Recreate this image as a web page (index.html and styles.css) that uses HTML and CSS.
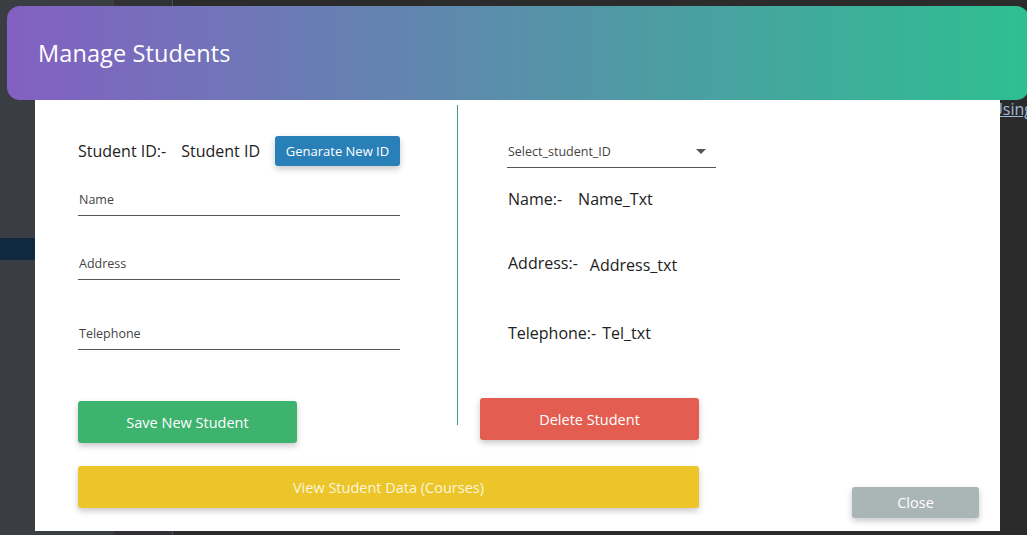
FILE: index.html
```html
<!DOCTYPE html>
<html>
<head>
<meta charset="utf-8">
<link rel="stylesheet" href="styles.css">
</head>
<body>
<div class="app">
  <div class="side">
    <div class="side-band"></div>
  </div>
  <div class="side2"></div>
  <div class="main">
    <a class="link" href="#">Using</a>
  </div>
</div>

<div class="modal">
  <div class="header"><h1 class="title">Manage Students</h1></div>
  <div class="body">
    <div class="top">
      <div class="left">
        <div class="id-row">
          <span class="lbl">Student ID:-</span>
          <span class="lbl id-val">Student ID</span>
          <button class="btn btn-blue">Genarate New ID</button>
        </div>
        <div class="field f-name"><span class="flabel">Name</span></div>
        <div class="field f-addr"><span class="flabel">Address</span></div>
        <div class="field f-tel"><span class="flabel">Telephone</span></div>
        <button class="btn btn-green">Save New Student</button>
      </div>
      <div class="divider"></div>
      <div class="right">
        <div class="select"><span class="flabel">Select_student_ID</span><span class="caret"></span></div>
        <div class="info i-name"><span class="lbl">Name:-</span><span class="lbl v-name">Name_Txt</span></div>
        <div class="info i-addr"><span class="lbl">Address:-</span><span class="lbl v-addr">Address_txt</span></div>
        <div class="info i-tel"><span class="lbl">Telephone:-</span><span class="lbl v-tel">Tel_txt</span></div>
        <button class="btn btn-red">Delete Student</button>
      </div>
    </div>
    <div class="bottom">
      <button class="btn btn-yellow">View Student Data (Courses)</button>
      <button class="btn btn-grey">Close</button>
    </div>
  </div>
</div>
</body>
</html>
```

FILE: styles.css
```css
* { box-sizing: border-box; }
html, body { margin: 0; padding: 0; }
body {
  width: 1027px;
  height: 535px;
  overflow: hidden;
  font-family: "Open Sans", "Noto Sans", sans-serif;
  position: relative;
  background: #2b2b2b;
}

/* background application */
.app {
  display: grid;
  grid-template-columns: 114px 59px 1fr;
  height: 535px;
}
.side { background: #3a3e42; padding-top: 238px; }
.side-band { height: 22px; background: #0f2a40; }
.side2 { background: #303235; border-right: 1px solid #4d4f52; }
.main { background: #2b2b2b; display: flex; flex-direction: column; align-items: flex-end; }
.link {
  margin-top: 99px;
  margin-right: -6px;
  color: #9fb8d8;
  font-family: "Open Sans", sans-serif;
  font-size: 16px;
  line-height: 20px;
}

/* modal overlay */
.modal {
  position: absolute;
  left: 7px;
  top: 6px;
  width: 1022px;
}
.header {
  height: 94px;
  border-radius: 13px;
  background: linear-gradient(to right, #8360c3, #2ebf91);
  display: flex;
  align-items: center;
  padding-left: 31px;
}
.title {
  margin: 0;
  color: #fff;
  font-weight: 400;
  font-size: 23.5px;
  line-height: 30px;
  letter-spacing: 0.1px;
}
.body {
  margin-left: 28px;
  width: 965px;
  height: 431px;
  background: #fff;
  padding-left: 43px;
}
.top { display: flex; height: 343px; }
.left { width: 322px; display: flex; flex-direction: column; padding-top: 36px; }
.id-row { display: flex; align-items: center; height: 30px; }
.lbl { font-size: 16px; color: #222; line-height: 20px; white-space: nowrap; }
.id-val { margin-left: 15px; }

.btn {
  border: none;
  border-radius: 3px;
  color: #fff;
  font-family: "Open Sans", "Noto Sans", sans-serif;
  box-shadow: 0 3px 6px rgba(0, 0, 0, 0.22);
  padding: 0;
}
.btn-blue {
  background: #2980b9;
  margin-left: 15px;
  width: 126px;
  height: 30px;
  font-size: 13px;
}
.field {
  display: flex;
  flex-direction: column;
  justify-content: flex-end;
  border-bottom: 1px solid #555;
  padding-bottom: 7px;
}
.flabel {
  font-size: 12.5px;
  line-height: 18px;
  color: #444;
  padding-left: 1px;
  white-space: nowrap;
  position: relative;
  top: 1px;
}
.f-name { height: 50px; }
.f-addr { height: 64px; }
.f-tel { height: 70px; }
.btn-green {
  background: #3db36e;
  margin-top: 51px;
  width: 219px;
  height: 42px;
  font-size: 14.5px;
}
.divider {
  width: 1px;
  background: #3c9f6e;
  margin-left: 57px;
  margin-top: 5px;
  height: 320px;
}
.right { margin-left: 22px; display: flex; flex-direction: column; padding-top: 36px; }
.select {
  margin-left: 27px;
  width: 209px;
  height: 32px;
  border-bottom: 1px solid #555;
  display: flex;
  align-items: flex-end;
  justify-content: space-between;
  padding-bottom: 7px;
}
.caret {
  width: 0; height: 0;
  border-left: 5px solid transparent;
  border-right: 5px solid transparent;
  border-top: 5px solid #555;
  margin-right: 10px;
  margin-bottom: 6px;
}
.info { margin-left: 28px; display: flex; align-items: center; height: 20px; }
.i-name { margin-top: 21px; }
.i-addr { margin-top: 44px; }
.i-tel { margin-top: 50px; }
.v-name { margin-left: 16px; }
.v-addr { margin-left: 12px; position: relative; top: 2px; }
.v-tel { margin-left: 6px; }
.btn-red {
  background: #e35e50;
  margin-top: 55px;
  width: 219px;
  height: 42px;
  font-size: 14.5px;
}
.bottom { display: flex; align-items: flex-start; margin-top: 23px; }
.btn-yellow {
  background: #ebc52a;
  width: 621px;
  height: 42px;
  font-size: 14.5px;
  color: #fdf6dc;
}
.btn-grey {
  background: #aab5b6;
  margin-left: 153px;
  margin-top: 21px;
  width: 127px;
  height: 31px;
  font-size: 14.5px;
}
```
